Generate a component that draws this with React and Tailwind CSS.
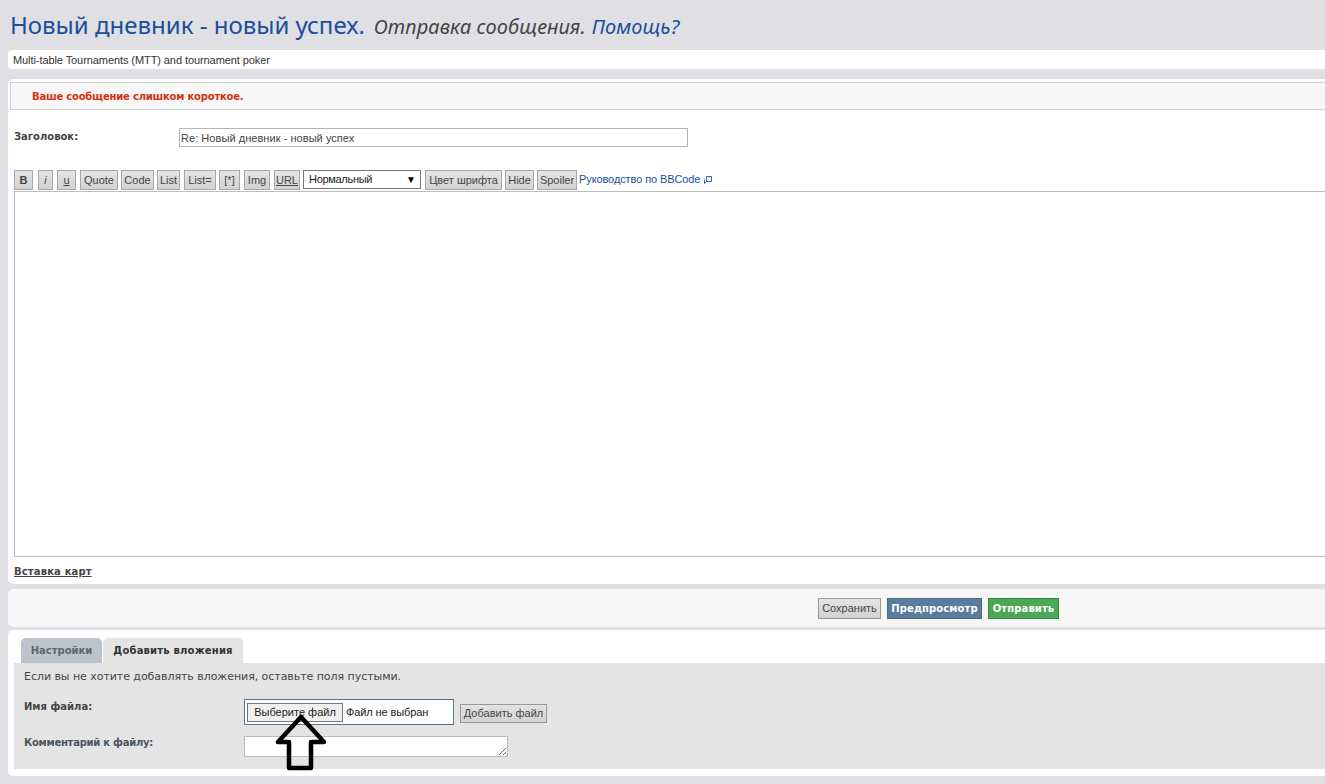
const narrow = "font-['Liberation_Sans',sans-serif]";
const title = "font-['Noto_Sans','Liberation_Sans',sans-serif]";
const wide = "font-['DejaVu_Sans','Liberation_Sans',sans-serif]";

const btn = "shrink-0 h-[20px] flex items-center justify-center border border-[#a9a9a9] bg-linear-to-b from-[#e4e4e4] to-[#d2d2d2] text-[11px] leading-none text-[#444]";

const tools = [
  { t: "B", w: "w-[19px]", m: "ml-0", c: "font-bold text-[#333]" },
  { t: "i", w: "w-[15px]", m: "ml-[5px]", c: "italic" },
  { t: "u", w: "w-[19px]", m: "ml-[4px]", c: "underline" },
  { t: "Quote", w: "w-[38px]", m: "ml-[4px]", c: "" },
  { t: "Code", w: "w-[33px]", m: "ml-[3px]", c: "" },
  { t: "List", w: "w-[23px]", m: "ml-[3px]", c: "" },
  { t: "List=", w: "w-[32px]", m: "ml-[4px]", c: "" },
  { t: "[*]", w: "w-[21px]", m: "ml-[3px]", c: "" },
  { t: "Img", w: "w-[26px]", m: "ml-[4px]", c: "" },
  { t: "URL", w: "w-[26px]", m: "ml-[4px]", c: "underline" },
];

const tools2 = [
  { t: "Цвет шрифта", w: "w-[77px]", m: "ml-[4px]" },
  { t: "Hide", w: "w-[29px]", m: "ml-[3px]" },
  { t: "Spoiler", w: "w-[40px]", m: "ml-[3px]" },
];

export default function App() {
  return (
    <div className={`relative h-[784px] w-[1325px] overflow-hidden bg-[#dfdfe4] ${narrow}`}>
      <h1 className={`flex h-[50px] items-baseline pl-[10px] pt-[8px] text-[24px] leading-[33px] font-normal whitespace-nowrap text-[#1b4f9c] ${title}`}>
        <span>Новый дневник - новый успех.</span>
        <span className="ml-[9px] text-[20px] tracking-[0.1px] italic text-[#444]">Отправка сообщения.</span>
        <span className="ml-[6px] text-[20px] tracking-[0.1px] italic text-[#1b4f9c]">Помощь?</span>
      </h1>

      <div className="ml-[8px] flex h-[19px] items-center rounded-l-[4px] bg-white pt-px pl-[5px] text-[11px] tracking-[-0.08px] text-[#333]">
        Multi-table Tournaments (MTT) and tournament poker
      </div>

      <div className="mt-[10px] ml-[8px] h-[505px] rounded-l-[5px] bg-white pt-[3px] pl-[2px]">
        <div className={`flex h-[28px] items-center border border-r-0 border-[#cfcfcf] bg-[#f7f7f7] pt-px pl-[21px] text-[10px] tracking-[-0.2px] font-bold text-[#d6300f] ${wide}`}>
          Ваше сообщение слишком короткое.
        </div>

        <div className="mt-[19px] ml-[4px] flex items-start">
          <label className={`w-[165px] shrink-0 pt-px text-[10px] leading-[14px] font-bold text-[#444] ${wide}`}>Заголовок:</label>
          <div className="-mt-px flex h-[19px] w-[509px] items-center border border-[#b4b4b4] bg-white pt-[2px] pl-px text-[11px] tracking-[0.05px] text-[#444]">
            Re: Новый дневник - новый успех
          </div>
        </div>

        <div className="mt-[23px] ml-[4px] flex items-start">
          {tools.map((b) => (
            <div key={b.t} className={`${btn} ${b.w} ${b.m} ${b.c}`}>{b.t}</div>
          ))}
          <div className="ml-[3px] flex h-[19px] w-[118px] shrink-0 items-center justify-between border border-[#767676] bg-white pr-[4px] pl-[5px] text-[11px] text-[#222]">
            <span className="tracking-[-0.3px]">Нормальный</span>
            <span className="text-[10px] leading-none text-black">▼</span>
          </div>
          {tools2.map((b) => (
            <div key={b.t} className={`${btn} ${b.w} ${b.m}`}>{b.t}</div>
          ))}
          <a className="ml-[2px] flex h-[18px] shrink-0 items-center text-[11px] tracking-[-0.1px] text-[#1b4f9c]">
            Руководство по BBCode
            <svg className="ml-[3px]" width="9" height="9" viewBox="0 0 9 9" fill="none" stroke="#2f6aa8" strokeWidth="1">
              <path d="M3.5 1.5h5v5h-5zM3.5 6.5l-2 2v-4" />
            </svg>
          </a>
        </div>

        <div className="mt-px ml-[4px] h-[366px] border-y border-l border-[#bdbdbd] bg-white" />

        <a className={`mt-[8px] ml-[4px] block text-[10px] tracking-[0.15px] leading-[13px] font-bold text-[#444] underline ${wide}`}>Вставка карт</a>
      </div>

      <div className="mt-[5px] ml-[8px] flex h-[38px] items-center rounded-l-[5px] bg-[#f6f6f6] pl-[810px]">
        <div className="flex h-[21px] w-[63px] items-center justify-center border border-[#999] bg-linear-to-b from-[#e4e4e4] to-[#d2d2d2] text-[11px] text-[#444]">Сохранить</div>
        <div className={`ml-[6px] flex h-[21px] w-[95px] items-center justify-center border border-[#4a6a88] bg-[#5c7c9b] text-[10px] tracking-[0.1px] font-bold text-white ${wide}`}>Предпросмотр</div>
        <div className={`ml-[6px] flex h-[21px] w-[71px] items-center justify-center border border-[#2f8a3c] bg-[#4ea657] text-[10px] tracking-[0.1px] font-bold text-white ${wide}`}>Отправить</div>
      </div>

      <div className="mt-[3px] ml-[8px] h-[146px] rounded-l-[5px] bg-white pt-[8px] pl-[6px]">
        <div className={`ml-[7px] flex h-[25px] items-end text-[10px] font-bold ${wide}`}>
          <div className="flex h-[25px] w-[81px] items-center justify-center rounded-t-[5px] bg-[#bcc3cd] text-[#5b6670]">Настройки</div>
          <div className="ml-px flex h-[25px] w-[140px] items-center justify-center rounded-t-[5px] bg-[#e4e4e4] tracking-[0.2px] text-[#333]">Добавить вложения</div>
        </div>
        <div className="h-[106px] bg-[#e4e4e4] pt-[7px] pl-[10px]">
          <p className={`text-[11px] tracking-[-0.05px] leading-[14px] text-[#444] ${wide}`}>Если вы не хотите добавлять вложения, оставьте поля пустыми.</p>
          <div className="mt-[16px] flex items-start">
            <label className={`w-[220px] shrink-0 text-[10px] leading-[14px] font-bold text-[#444] ${wide}`}>Имя файла:</label>
            <div className="-mt-[1px] flex h-[26px] w-[210px] shrink-0 items-center border border-[#4f7a99] bg-white pl-[2px] text-[11px] text-[#222]">
              <div className="flex h-[19px] w-[96px] items-center justify-center border border-[#777] bg-[#efefef]">Выберите файл</div>
              <span className="ml-[3px] tracking-[-0.1px]">Файл не выбран</span>
            </div>
            <div className="mt-[4px] ml-[6px] flex h-[19px] w-[87px] items-center justify-center border border-[#999] bg-linear-to-b from-[#e4e4e4] to-[#d2d2d2] text-[11px] text-[#444]">Добавить файл</div>
          </div>
          <div className="mt-[11px] flex items-start">
            <label className={`w-[220px] shrink-0 text-[10px] tracking-[-0.25px] leading-[14px] font-bold text-[#4a5560] ${wide}`}>Комментарий к файлу:</label>
            <div className="relative h-[21px] w-[264px] shrink-0 border border-[#bbb] bg-white">
              <svg className="absolute right-0 bottom-0" width="9" height="9" viewBox="0 0 9 9" stroke="#666" strokeWidth="1">
                <path d="M1 8L8 1M5 8L8 5" />
              </svg>
            </div>
          </div>
        </div>
      </div>

      <svg className="absolute top-[712px] left-[272px]" width="58" height="62" viewBox="0 0 58 62" fill="none" stroke="#000" strokeWidth="4.5" strokeLinejoin="round">
        <path d="M29 5L6 30H17V56H39V30H52Z" />
      </svg>
    </div>
  );
}
